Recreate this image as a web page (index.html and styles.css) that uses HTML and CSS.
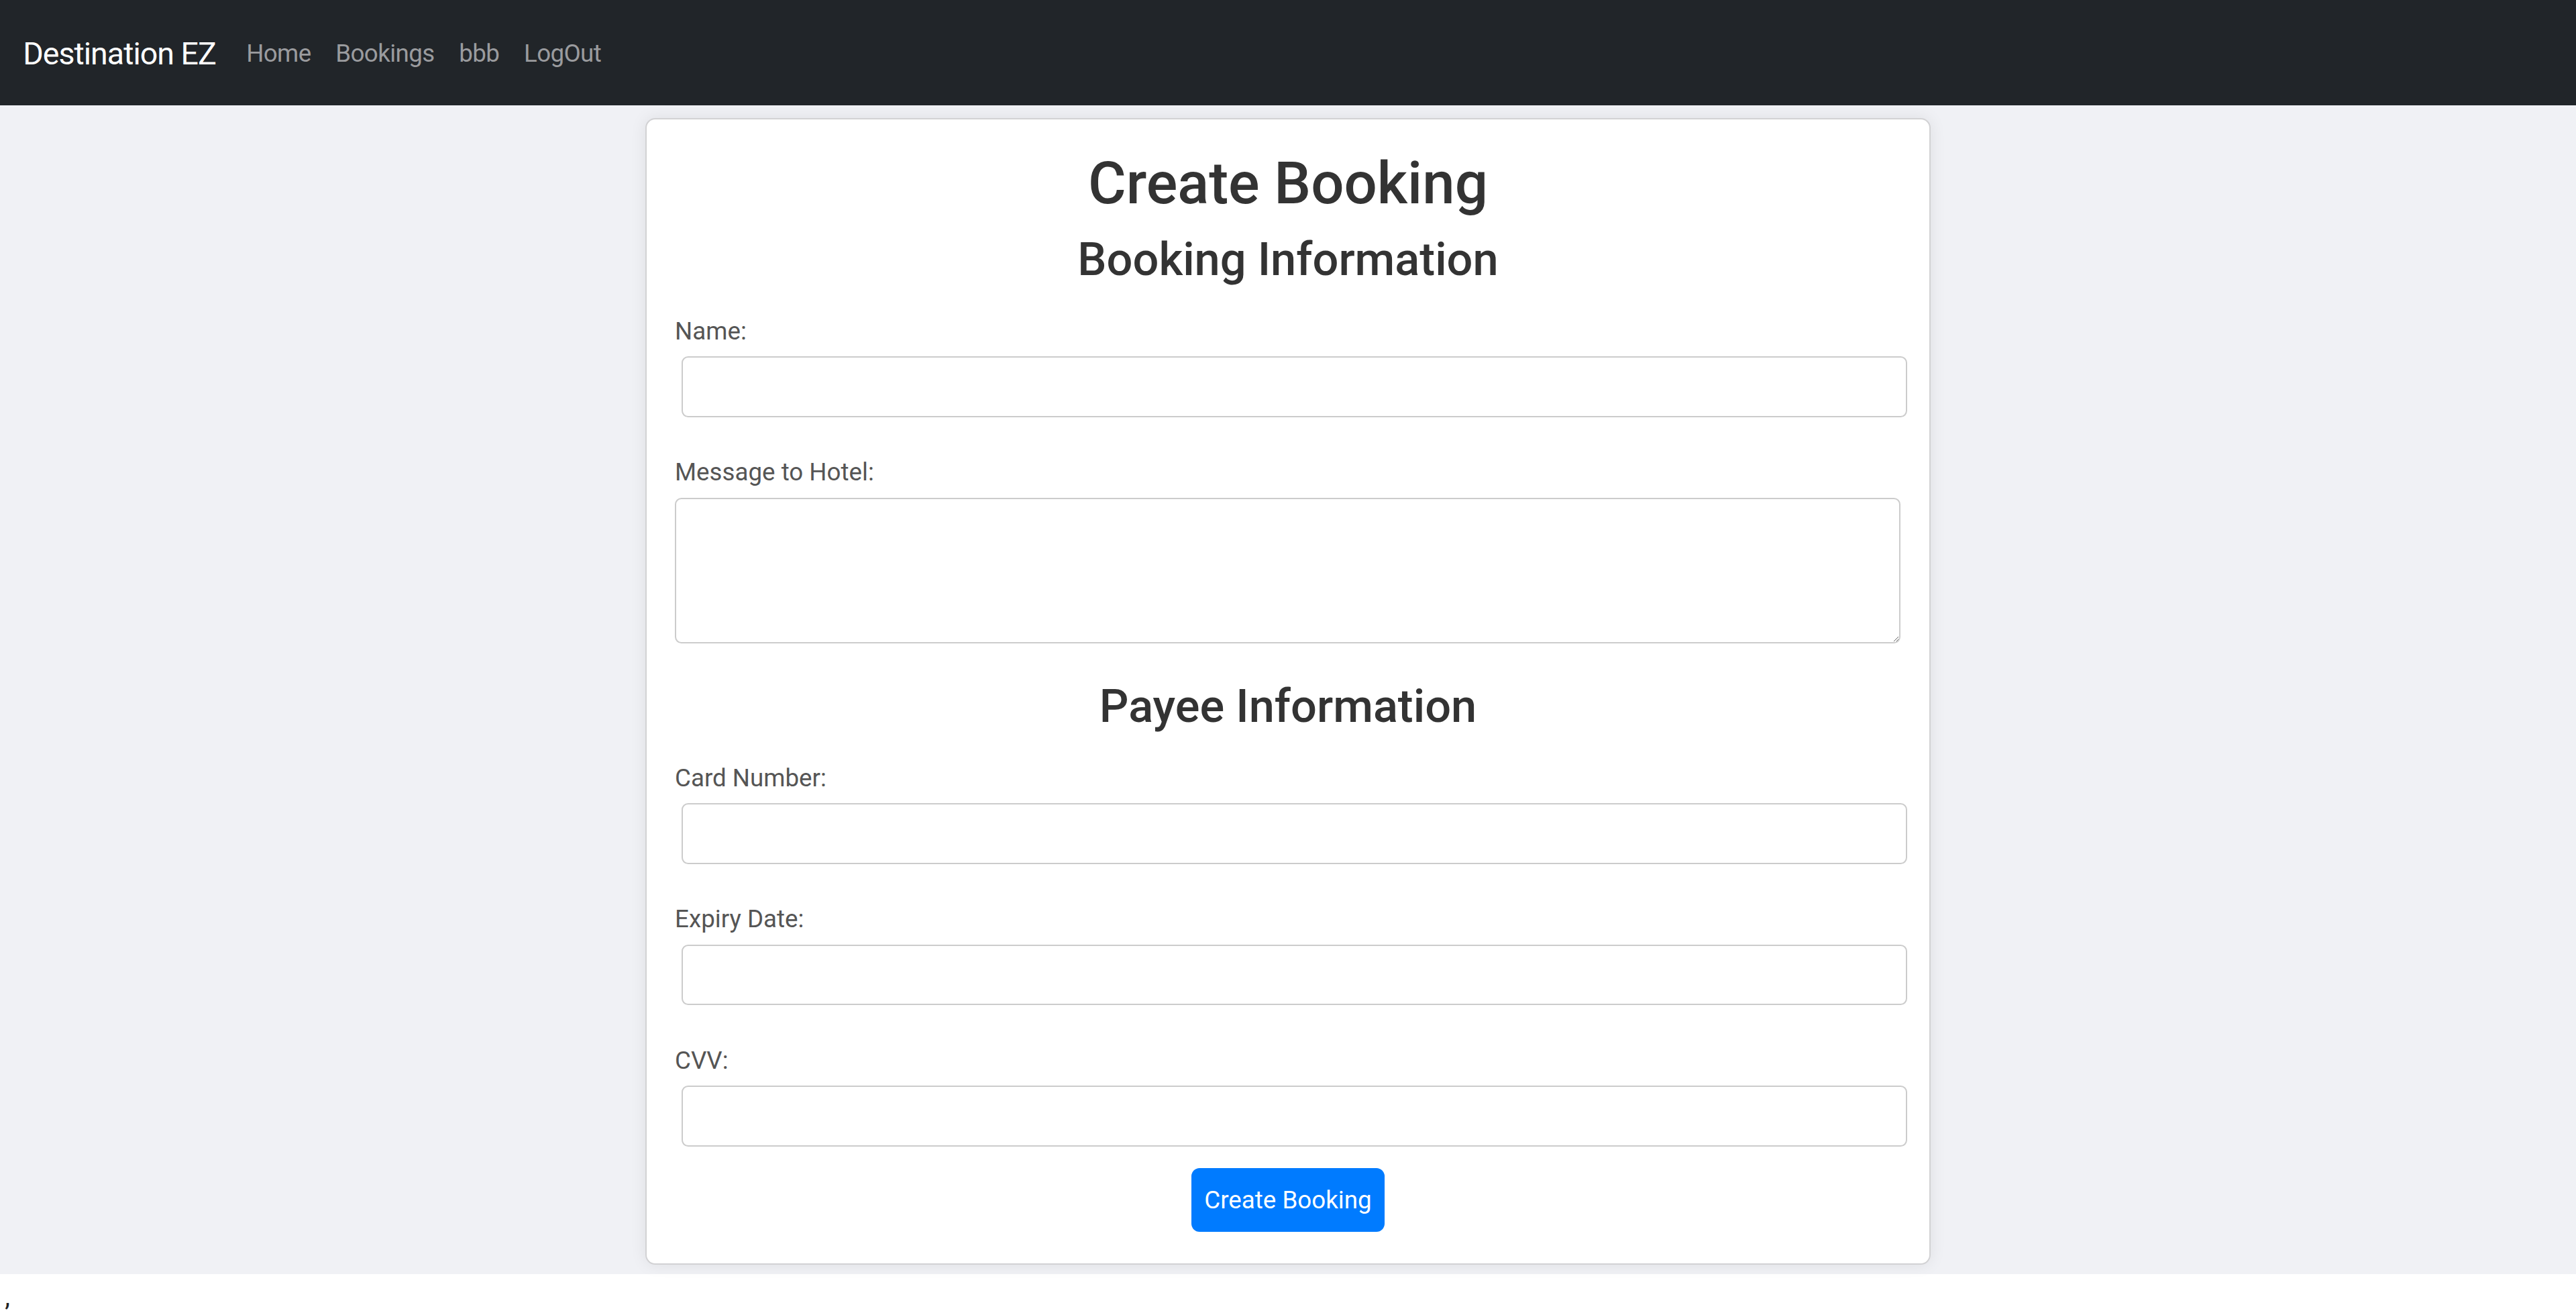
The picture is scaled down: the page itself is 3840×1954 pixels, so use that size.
FILE: index.html
```html
<!DOCTYPE html>
<html lang="en">
<head>
<meta charset="utf-8">
<title>Destination EZ - Create Booking</title>
<link rel="stylesheet" href="styles.css">
</head>
<body>
<nav class="navbar">
  <a class="brand" href="#">Destination EZ</a>
  <ul class="nav-links">
    <li><a href="#">Home</a></li>
    <li><a href="#">Bookings</a></li>
    <li><a href="#">bbb</a></li>
    <li><a href="#">LogOut</a></li>
  </ul>
</nav>
<main class="main">
  <form class="card">
    <h1 class="title">Create Booking</h1>
    <h2 class="section-title">Booking Information</h2>
    <div class="field">
      <label class="label" for="name">Name:</label>
      <input class="input" id="name" type="text">
    </div>
    <div class="field before-section">
      <label class="label" for="msg">Message to Hotel:</label>
      <textarea class="textarea" id="msg"></textarea>
    </div>
    <h2 class="section-title payee">Payee Information</h2>
    <div class="field">
      <label class="label" for="card">Card Number:</label>
      <input class="input" id="card" type="text">
    </div>
    <div class="field">
      <label class="label" for="exp">Expiry Date:</label>
      <input class="input" id="exp" type="text">
    </div>
    <div class="field last">
      <label class="label" for="cvv">CVV:</label>
      <input class="input" id="cvv" type="text">
    </div>
    <div class="actions">
      <button class="btn" type="button">Create Booking</button>
    </div>
  </form>
</main>
<div class="trailer">,</div>
</body>
</html>
```
FILE: styles.css
```css
html {
  zoom: 2.449;
}
* {
  box-sizing: border-box;
}
body {
  margin: 0;
  background: #ffffff;
  font-family: Roboto, "Noto Sans", "Liberation Sans", sans-serif;
  color: #333333;
}
.navbar {
  height: 64px;
  background: #212529;
  display: flex;
  align-items: center;
  padding: 1px 14px 0;
}
.brand {
  color: #ffffff;
  font-size: 19px;
  letter-spacing: -0.4px;
  text-decoration: none;
  margin-right: 11px;
}
.nav-links {
  list-style: none;
  margin: 0;
  padding: 0;
  display: flex;
}
.nav-links a {
  display: block;
  padding: 0 7.5px;
  color: #9a9b9e;
  font-size: 15px;
  letter-spacing: -0.25px;
  text-decoration: none;
}
.main {
  background: #f0f1f5;
  padding: 8px 0 6px;
}
.card {
  width: 782px;
  margin: 0 auto;
  background: #ffffff;
  border: 1px solid #d2d2d4;
  border-radius: 6px;
  box-shadow: 0 0 10px rgba(0, 0, 0, 0.08);
  padding: 17px 17px 19px;
}
.title {
  margin: 0;
  text-align: center;
  font-size: 35.5px;
  font-weight: 500;
  line-height: 44px;
  color: #333333;
}
.section-title {
  margin: 5px 0 15px;
  text-align: center;
  font-size: 28px;
  font-weight: 500;
  line-height: 38px;
  color: #333333;
}
.section-title.payee {
  margin: 19px 0 15px;
}
.field {
  margin-bottom: 24px;
}
.field.before-section {
  margin-bottom: 19px;
}
.field.last {
  margin-bottom: 13px;
}
.label {
  display: block;
  font-size: 15px;
  line-height: 20px;
  color: #555555;
  margin-bottom: 5px;
}
.input {
  display: block;
  width: 746px;
  height: 37px;
  margin-left: 4px;
  border: 1px solid #cccccc;
  border-radius: 4px;
  background: #ffffff;
  font-family: inherit;
  font-size: 15px;
  padding: 0 8px;
}
.textarea {
  display: block;
  width: 746px;
  height: 89px;
  border: 1px solid #cccccc;
  border-radius: 4px;
  background: #ffffff;
  font-family: inherit;
  font-size: 15px;
  padding: 6px 8px;
  resize: vertical;
}
.actions {
  display: flex;
  justify-content: center;
}
.btn {
  width: 118px;
  height: 39px;
  border: none;
  border-radius: 5px;
  background: #007bff;
  color: #ffffff;
  font-family: inherit;
  font-size: 15px;
  padding: 0;
}
.trailer {
  font-size: 16px;
  line-height: 24px;
  padding: 2px 0 0 3px;
  color: #222222;
}
```
